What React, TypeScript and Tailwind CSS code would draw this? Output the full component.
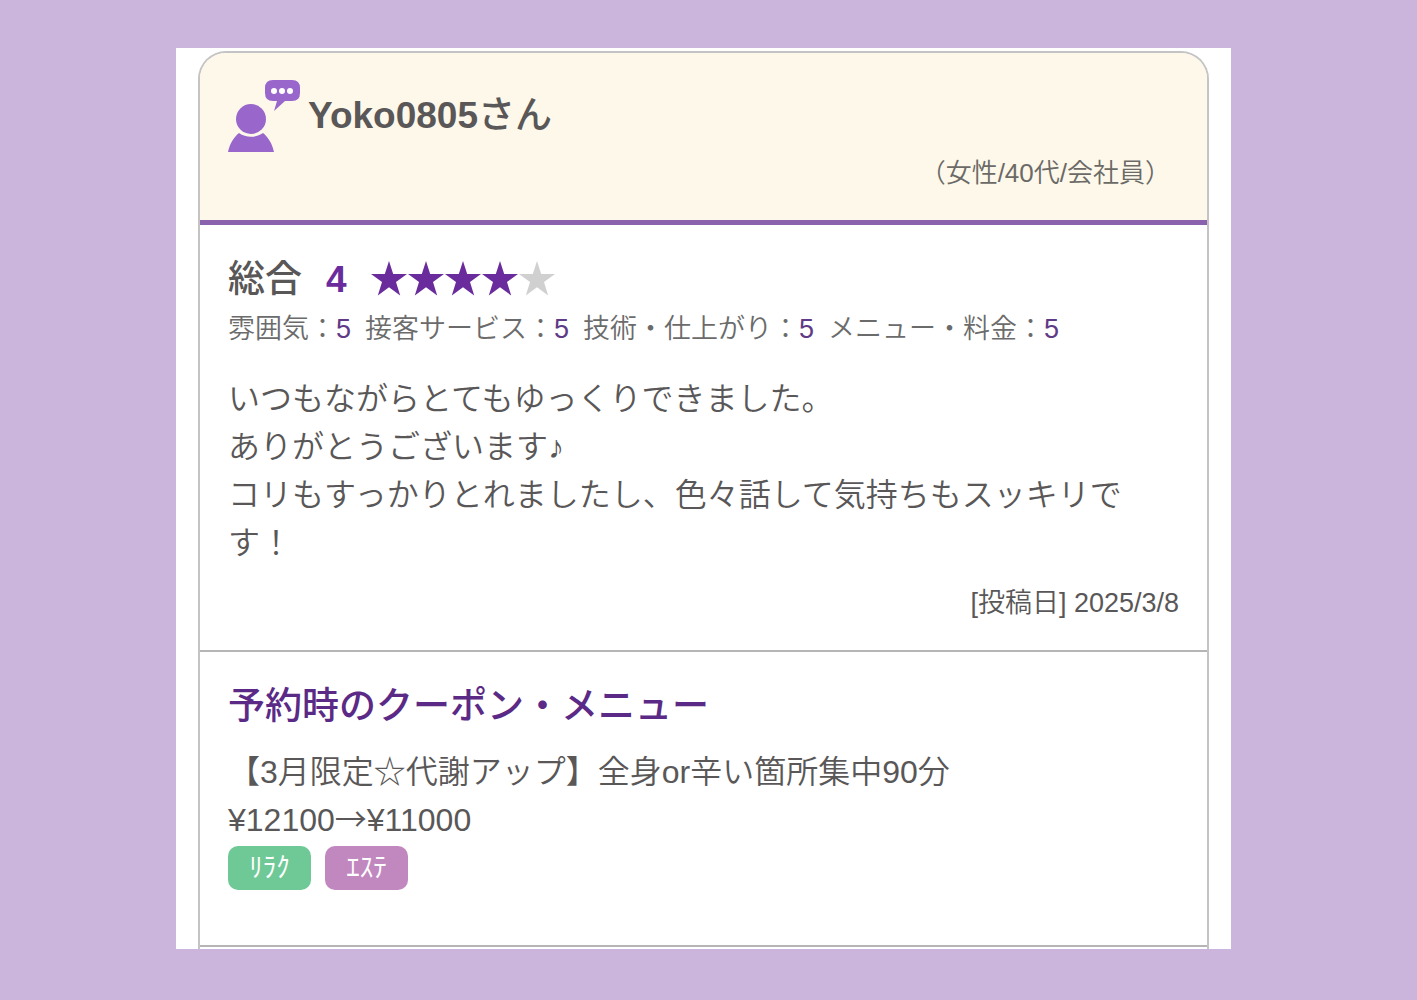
import React from 'react';

const FONT = "font-['Liberation_Sans','Noto_Sans_CJK_JP',sans-serif]";

const scores = [
    { label: '雰囲気', value: 5 },
    { label: '接客サービス', value: 5 },
    { label: '技術・仕上がり', value: 5 },
    { label: 'メニュー・料金', value: 5 },
];

const tags = [
    { label: 'ﾘﾗｸ', color: 'bg-[#6fc997]' },
    { label: 'ｴｽﾃ', color: 'bg-[#c188c0]' },
];

const UserIcon = () => (
    <svg viewBox="0 0 72 72" className="size-[72px] shrink-0" fill="#9966cc" aria-hidden="true">
        <circle cx="23" cy="39" r="15" />
        <path d="M0 72C2 63 6 57 11 53C18 58 28 58 35 53C40 57 44 63 46 72Z" />
        <path d="M45 0H64Q72 0 72 8V13Q72 21 64 21H57L46 31L49 21H45Q37 21 37 13V8Q37 0 45 0Z" />
        <circle cx="46" cy="11" r="3" fill="#fff" />
        <circle cx="54" cy="11" r="3" fill="#fff" />
        <circle cx="62" cy="11" r="3" fill="#fff" />
    </svg>
);

const Star = ({ filled }: { filled: boolean }) => (
    <svg viewBox="0 0 37 38" className={`w-[37px] h-[38px] ${filled ? 'fill-[#6a2c9c]' : 'fill-[#d0d0d0]'}`} aria-hidden="true">
        <path d="M18 0L22.200 13H36L25 21L29.200 34.500L18 26.200L6.800 34.500L11 21L0 13H13.800Z" />
    </svg>
);

const Rating = ({ value }: { value: number }) => (
    <div className="flex" role="img" aria-label={`5点中${value}点`}>
        {[1, 2, 3, 4, 5].map((n) => (
            <Star key={n} filled={n <= value} />
        ))}
    </div>
);

const App = () => (
    <main lang="ja" className={`min-h-screen bg-[#cbb5dc] pt-12 pb-[51px] pl-44 pr-[186px] text-[#595757] ${FONT}`}>
        <div className="bg-white pt-[3px] px-[22px]">
            <article className="border-2 border-b-0 border-[#c4c4c4] rounded-t-[28px] overflow-hidden pb-[2px]">
                <header className="bg-[#fef8eb] border-b-[5px] border-[#8a62ad] px-7 pt-[27px] pb-[27px]">
                    <div className="flex items-center gap-2">
                        <UserIcon />
                        <h1 className="text-[37px] leading-[48px] font-bold">
                            Yoko0805<span className="font-medium">さん</span>
                        </h1>
                    </div>
                    <p className="mt-px pr-2 text-right text-[26px] leading-10 font-[350] text-[#6b6a66]">（女性/40代/会社員）</p>
                </header>

                <section className="border-b-2 border-[#b5b5b5] px-7 pt-[31px] pb-[27px]">
                    <div className="flex items-center gap-6 text-[37px] leading-[48px] font-bold">
                        <h2 className="font-medium">総合</h2>
                        <span className="text-[#6a2c9c]">4</span>
                        <Rating value={4} />
                    </div>
                    <ul className="flex flex-wrap gap-x-[14px] text-[27px] leading-[50px] font-[350] text-[#6b6b6b]">
                        {scores.map((s) => (
                            <li key={s.label}>
                                {s.label}：<span className="text-[#5f3a86]">{s.value}</span>
                            </li>
                        ))}
                    </ul>
                    <p className="mt-[21px] text-[32px] leading-[48px] font-[350]">
                        いつもながらとてもゆっくりできました。<br />
                        ありがとうございます♪<br />
                        コリもすっかりとれましたし、色々話して気持ちもスッキリです！
                    </p>
                    <p className="mt-4 text-right text-[27px] leading-10 font-[350]">[投稿日] 2025/3/8</p>
                </section>

                <section className="border-b-2 border-[#b5b5b5] px-7 pt-[31px] pb-[55px]">
                    <h2 className="text-[37px] leading-[48px] font-medium text-[#5a2a86]">予約時のクーポン・メニュー</h2>
                    <p className="mt-[17px] text-[32px] leading-[48px] font-[350]">
                        【3月限定☆代謝アップ】全身or辛い箇所集中90分<br />
                        ¥12100<span className="font-['Noto_Sans_CJK_JP',sans-serif] leading-none">→</span>¥11000
                    </p>
                    <ul className="mt-[2px] flex gap-[14px]">
                        {tags.map((t) => (
                            <li key={t.label} className={`w-[83px] text-center text-white text-[27px] leading-[44px] rounded-[10px] ${t.color}`}>
                                {t.label}
                            </li>
                        ))}
                    </ul>
                </section>
            </article>
        </div>
    </main>
);

export default App;
